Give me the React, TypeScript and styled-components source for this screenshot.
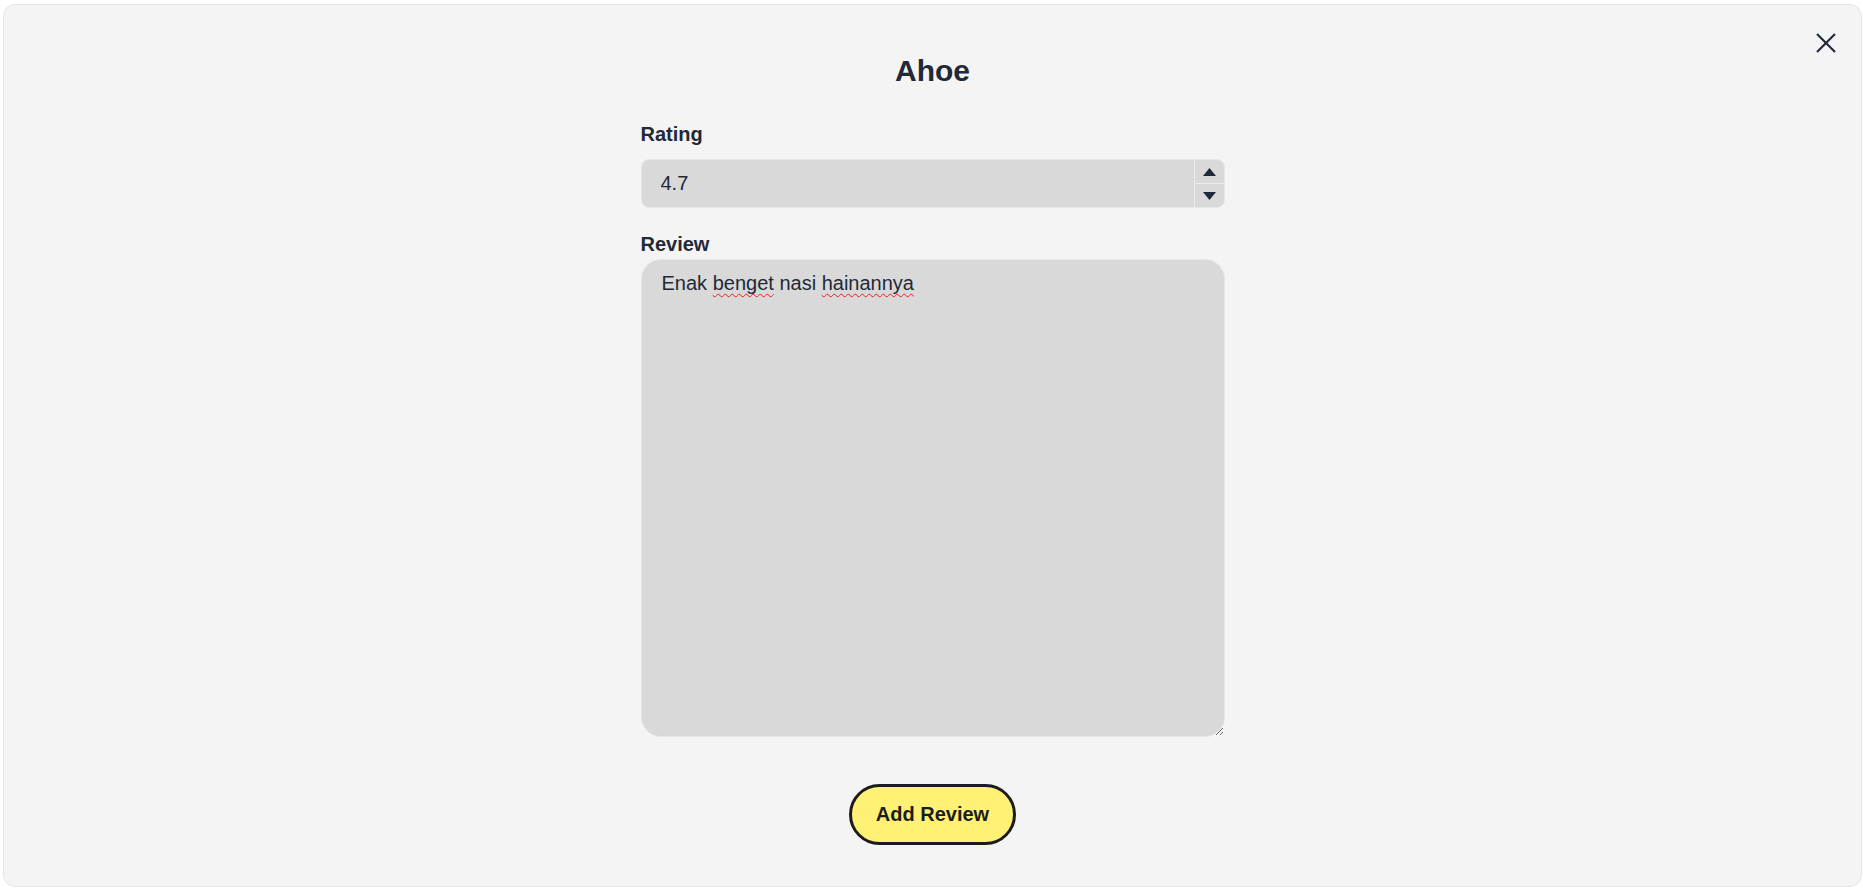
import React from "react";
import styled, { createGlobalStyle } from "styled-components";

const GlobalStyle = createGlobalStyle`
  html, body {
    margin: 0;
    padding: 0;
    background: #ffffff;
  }
  body {
    font-family: "Liberation Sans", Arial, sans-serif;
  }
  *, *::before, *::after {
    box-sizing: border-box;
  }
`;

const Page = styled.div`
  height: 888px;
  padding: 4px 1px 1px 3px;
  display: flex;
`;

const Dialog = styled.section`
  position: relative;
  flex: 1;
  background: #f4f4f4;
  border: 1px solid #e6e6e6;
  border-radius: 12px;
  display: flex;
  flex-direction: column;
  align-items: center;
  padding-top: 49px;
`;

const CloseButton = styled.button`
  position: absolute;
  top: 28px;
  right: 25px;
  width: 20px;
  height: 20px;
  padding: 0;
  border: none;
  background: none;
  display: flex;
  align-items: center;
  justify-content: center;
  color: #1f2937;
  cursor: pointer;
`;

const Title = styled.h2`
  margin: 0;
  font-size: 30px;
  line-height: 34px;
  font-weight: 700;
  color: #1f2937;
`;

const Form = styled.form`
  width: 584px;
  margin-top: 35px;
  display: flex;
  flex-direction: column;
  align-items: stretch;
`;

const Label = styled.label<{ $gap?: number }>`
  margin-top: ${(p) => p.$gap ?? 0}px;
  font-size: 20px;
  line-height: 23px;
  font-weight: 700;
  color: #1f2937;
`;

const NumberField = styled.div`
  margin-top: 13px;
  height: 49px;
  display: flex;
  background: #d9d9d9;
  border: 1px solid #e5e7eb;
  border-radius: 8px;
  overflow: hidden;
`;

const NumberInput = styled.input`
  flex: 1;
  min-width: 0;
  border: none;
  outline: none;
  background: transparent;
  padding: 0 19px;
  font-family: inherit;
  font-size: 20px;
  color: #1f2937;
`;

const Stepper = styled.div`
  width: 30px;
  display: flex;
  flex-direction: column;
  border-left: 1px solid #e9ebef;
`;

const StepButton = styled.button<{ $divider?: boolean }>`
  flex: 1;
  padding: 0;
  border: none;
  border-top: ${(p) => (p.$divider ? "1px solid #e9ebef" : "none")};
  background: transparent;
  display: flex;
  align-items: center;
  justify-content: center;
  color: #1f2937;
  cursor: pointer;
`;

const ReviewBox = styled.div`
  margin-top: 3px;
  height: 478px;
  background: #d9d9d9;
  border: 1px solid #e5e7eb;
  border-radius: 20px;
  padding: 12px 19px 12px 20px;
  font-size: 20px;
  line-height: 23px;
  color: #1f2937;
  resize: both;
  overflow: auto;
  outline: none;
  white-space: pre-wrap;
`;

const Misspelled = styled.span`
  text-decoration-line: underline;
  text-decoration-style: wavy;
  text-decoration-color: #ee1c1c;
  text-decoration-thickness: 1.4px;
  text-underline-offset: 3px;
  text-decoration-skip-ink: none;
`;

const SubmitButton = styled.button`
  margin-top: 47px;
  width: 167px;
  height: 61px;
  border: 3px solid #1c1c1c;
  border-radius: 999px;
  background: #fff176;
  font-family: inherit;
  font-size: 20px;
  font-weight: 700;
  color: #1c1c1c;
  cursor: pointer;
`;

const Triangle = ({ down }: { down?: boolean }) => (
  <svg width="13" height="8" viewBox="0 0 13 8" aria-hidden="true">
    <polygon
      points={down ? "0,0 13,0 6.5,8" : "0,8 13,8 6.5,0"}
      fill="currentColor"
    />
  </svg>
);

export default function App() {
  return (
    <>
      <GlobalStyle />
      <Page>
        <Dialog role="dialog" aria-label="Ahoe">
          <CloseButton type="button" aria-label="Close">
            <svg width="20" height="20" viewBox="0 0 20 20" aria-hidden="true">
              <line x1="1" y1="1" x2="19" y2="19" stroke="currentColor" strokeWidth="2.1" />
              <line x1="19" y1="1" x2="1" y2="19" stroke="currentColor" strokeWidth="2.1" />
            </svg>
          </CloseButton>
          <Title>Ahoe</Title>
          <Form onSubmit={(e) => e.preventDefault()}>
            <Label htmlFor="rating">Rating</Label>
            <NumberField>
              <NumberInput id="rating" type="text" inputMode="decimal" defaultValue="4.7" />
              <Stepper>
                <StepButton type="button" aria-label="Increase">
                  <Triangle />
                </StepButton>
                <StepButton type="button" aria-label="Decrease" $divider>
                  <Triangle down />
                </StepButton>
              </Stepper>
            </NumberField>
            <Label $gap={25}>Review</Label>
            <ReviewBox role="textbox" aria-multiline="true" contentEditable suppressContentEditableWarning>
              Enak <Misspelled>benget</Misspelled> nasi <Misspelled>hainannya</Misspelled>
            </ReviewBox>
          </Form>
          <SubmitButton type="button">Add Review</SubmitButton>
        </Dialog>
      </Page>
    </>
  );
}
